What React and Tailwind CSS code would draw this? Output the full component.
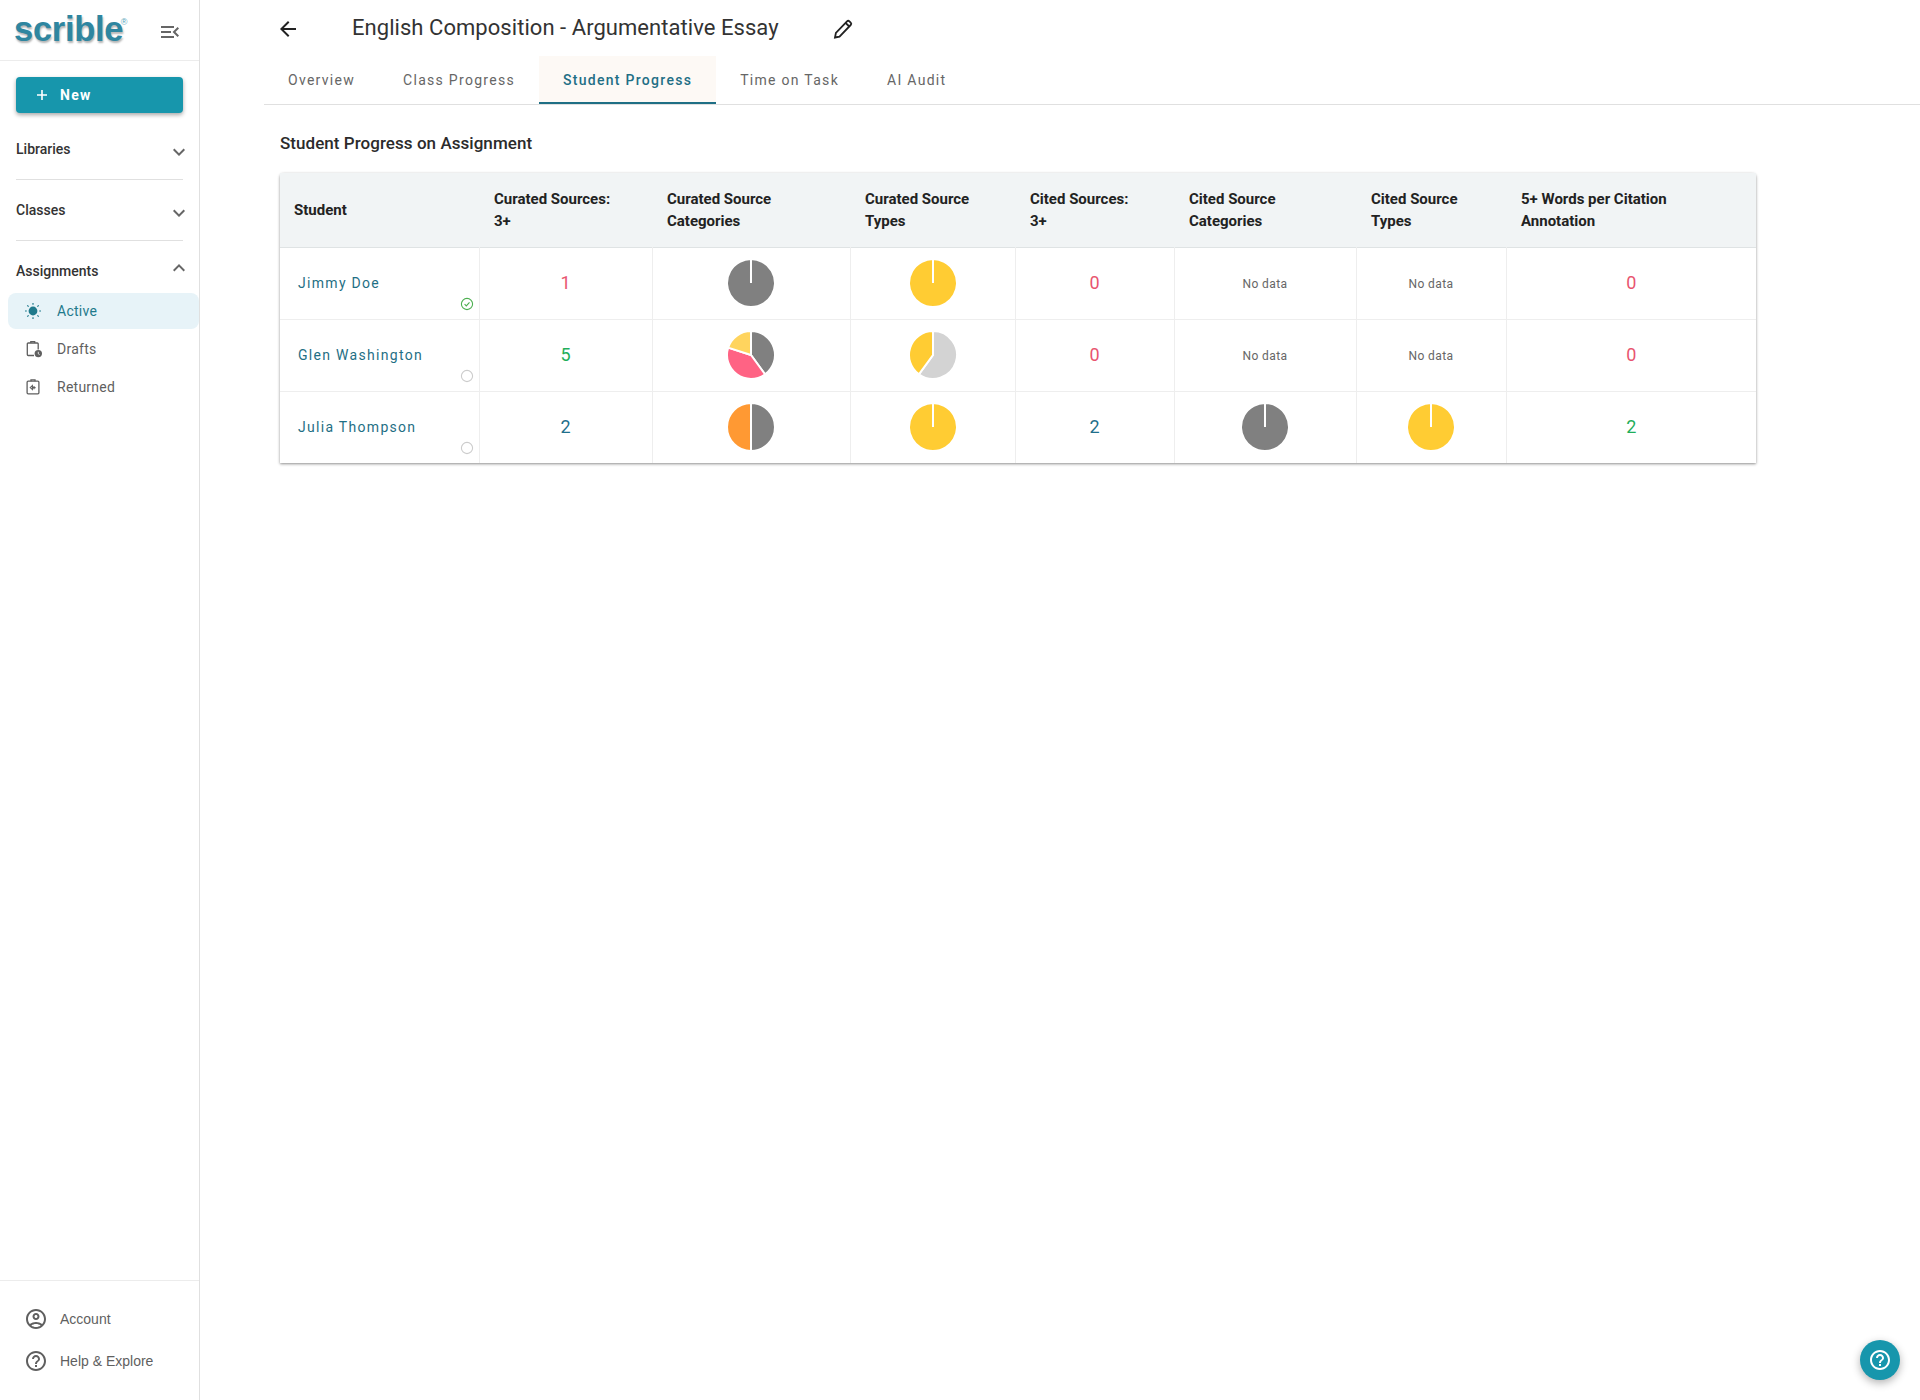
import React from "react";

const roboto = "font-['Roboto',sans-serif]";

// material icon paths, 24 box
const ICON = {
  menuOpen:
    "M3 18h13v-2H3v2zm0-5h10v-2H3v2zm0-7v2h13V6H3zm18 9.59L17.42 12 21 8.41 19.59 7l-5 5 5 5L21 15.59z",
  down: "M16.59 8.59 12 13.17 7.41 8.59 6 10l6 6 6-6z",
  up: "M12 8l-6 6 1.41 1.41L12 10.83l4.59 4.58L18 14z",
  back: "M20 11H7.83l5.59-5.59L12 4l-8 8 8 8 1.41-1.41L7.83 13H20v-2z",
  account:
    "M12 2C6.48 2 2 6.48 2 12s4.48 10 10 10 10-4.48 10-10S17.52 2 12 2zM7.35 18.5C8.66 17.56 10.26 17 12 17s3.34.56 4.65 1.5c-1.31.94-2.91 1.5-4.65 1.5s-3.34-.56-4.65-1.5zm10.79-1.38C16.45 15.8 14.32 15 12 15s-4.45.8-6.14 2.12C4.7 15.73 4 13.95 4 12c0-4.42 3.58-8 8-8s8 3.58 8 8c0 1.95-.7 3.73-1.86 5.12zM12 6c-1.93 0-3.5 1.57-3.5 3.5S10.07 13 12 13s3.5-1.57 3.5-3.5S13.93 6 12 6zm0 5c-.83 0-1.5-.67-1.5-1.5S11.17 8 12 8s1.5.67 1.5 1.5S12.83 11 12 11z",
  help: "M11 18h2v-2h-2v2zm1-16C6.48 2 2 6.48 2 12s4.48 10 10 10 10-4.48 10-10S17.52 2 12 2zm0 18c-4.41 0-8-3.59-8-8s3.59-8 8-8 8 3.59 8 8-3.59 8-8 8zm0-14c-2.21 0-4 1.79-4 4h2c0-1.1.9-2 2-2s2 .9 2 2c0 2-3 1.75-3 5h2c0-2.25 3-2.5 3-5 0-2.21-1.79-4-4-4z",
};

const Icon = ({ name, className }) => (
  <svg viewBox="0 0 24 24" fill="currentColor" className={className}>
    <path d={ICON[name]} />
  </svg>
);

const PencilIcon = () => (
  <svg viewBox="0 0 24 24" className="ml-[52px] mt-[17px] h-6 w-6 text-[#222]" fill="none" stroke="currentColor" strokeWidth="1.8">
    <path d="M4 20.5l.9-4.6L16 4.3a1.7 1.7 0 0 1 2.4 0l1.3 1.3a1.7 1.7 0 0 1 0 2.4L8.5 19.6 4 20.5z" />
    <path d="M14.6 5.8l3.6 3.7" />
  </svg>
);

const SunIcon = () => (
  <svg viewBox="0 0 18 18" className="h-[18px] w-[18px] text-[#1f7a8c]" fill="none" stroke="currentColor">
    <circle cx="9" cy="9" r="4.4" fill="currentColor" stroke="none" />
    <path
      d="M9 1v1.8M9 15.2V17M1 9h1.8M15.2 9H17M3.3 3.3l1.3 1.3M13.4 13.4l1.3 1.3M3.3 14.7l1.3-1.3M13.4 4.6l1.3-1.3"
      strokeWidth="1.2"
    />
  </svg>
);

const DraftIcon = () => (
  <svg viewBox="0 0 18 18" className="ml-[1px] -mr-[1px] h-[18px] w-[18px] text-[#5f5f5f]" fill="none" stroke="currentColor">
    <path d="M9 15.5H3.2a.9.9 0 0 1-.9-.9V3.9a.9.9 0 0 1 .9-.9h9.1a.9.9 0 0 1 .9.9v5.6" strokeWidth="1.3" />
    <path d="M5.8 3V1.7h3.9V3" strokeWidth="1.3" />
    <circle cx="13.3" cy="13.6" r="3.7" fill="currentColor" stroke="none" />
    <path d="M13.3 11.8v2l1.3.8" stroke="#fff" strokeWidth="0.8" />
  </svg>
);

const ReturnedIcon = () => (
  <svg viewBox="0 0 18 18" className="h-[18px] w-[18px] text-[#5f5f5f]" fill="none" stroke="currentColor">
    <rect x="3.1" y="3.2" width="11.8" height="12.6" rx="1.1" strokeWidth="1.3" />
    <path d="M7 3.2V1.9h4v1.3" strokeWidth="1.3" />
    <path d="M6.2 9.6l2.2-2v4zM8.2 9.6h3.4M10 8v3.2" strokeWidth="1.1" />
  </svg>
);

/* ---------- pie ---------- */

const GRAY = "#808080";
const YELLOW = "#ffcc33";
const LIGHT_YELLOW = "#ffd45e";
const PINK = "#ff6384";
const ORANGE = "#ff9933";
const SILVER = "#d3d3d3";

const Pie = ({ slices }) => {
  let start = 0;
  const r = 24;
  const point = (deg) => {
    const a = (deg * Math.PI) / 180;
    return [25 + r * Math.sin(a), 25 - r * Math.cos(a)];
  };

  return (
    <svg viewBox="0 0 50 50" className="mx-auto block h-[50px] w-[50px]">
      {slices.map(([pct, color]) => {
        const sweep = (pct / 100) * 360;
        const end = start + sweep;
        const [x1, y1] = point(start);
        const [x2, y2] = point(end === 360 && start === 0 ? 359.99 : end);
        const d = `M25 25L${x1} ${y1}A${r} ${r} 0 ${sweep > 180 ? 1 : 0} 1 ${x2} ${y2}Z`;
        start = end;
        return <path key={color + end} d={d} fill={color} stroke="#fff" strokeWidth="2" />;
      })}
    </svg>
  );
};

/* ---------- data ---------- */

const COLUMNS = [
  ["w-[199px] pl-[14px] pr-[15px]", ["Student"]],
  ["w-[173px] px-[15px]", ["Curated Sources:", "3+"]],
  ["w-[198px] px-[15px]", ["Curated Source", "Categories"]],
  ["w-[165px] px-[15px]", ["Curated Source", "Types"]],
  ["w-[159px] px-[15px]", ["Cited Sources:", "3+"]],
  ["w-[182px] px-[15px]", ["Cited Source", "Categories"]],
  ["w-[150px] px-[15px]", ["Cited Source", "Types"]],
  ["w-[250px] px-[15px]", ["5+ Words per Citation", "Annotation"]],
];

const RED = "text-[#e8546f]";
const GREEN = "text-[#1fae5b]";
const TEAL = "text-[#1f6f8b]";

const ROWS = [
  {
    name: "Jimmy Doe",
    done: true,
    cells: [
      [1, RED],
      [[100, GRAY]],
      [[100, YELLOW]],
      [0, RED],
      null,
      null,
      [0, RED],
    ],
  },
  {
    name: "Glen Washington",
    done: false,
    cells: [
      [5, GREEN],
      [
        [40, GRAY],
        [40, PINK],
        [20, LIGHT_YELLOW],
      ],
      [
        [60, SILVER],
        [40, YELLOW],
      ],
      [0, RED],
      null,
      null,
      [0, RED],
    ],
  },
  {
    name: "Julia Thompson",
    done: false,
    cells: [
      [2, TEAL],
      [
        [50, GRAY],
        [50, ORANGE],
      ],
      [[100, YELLOW]],
      [2, TEAL],
      [[100, GRAY]],
      [[100, YELLOW]],
      [2, GREEN],
    ],
  },
];

const Cell = ({ value }) => {
  if (value === null) {
    return <span className="text-xs tracking-[0.4px] text-[#666]">No data</span>;
  }
  if (typeof value[0] === "number" && typeof value[1] === "string" && value[1].startsWith("text-")) {
    return <span className={`text-lg ${value[1]}`}>{value[0]}</span>;
  }
  return <Pie slices={value} />;
};

const NavHeading = ({ label, open, divider }) => (
  <div className={`mx-4 flex h-[61px] items-start justify-between ${divider ? "border-b border-[#e0e0e0]" : ""}`}>
    <span className="mt-[20px] text-sm font-medium text-[#333]">{label}</span>
    <Icon
      name={open ? "up" : "down"}
      className={`-mr-[8px] h-6 w-6 text-[#666] ${open ? "mt-[15px]" : "mt-[21px]"}`}
    />
  </div>
);

const NavItem = ({ icon, label, active }) => (
  <div
    className={`ml-2 flex h-9 w-[191px] items-center gap-[15px] rounded-lg pl-4 text-sm tracking-[0.25px] ${
      active ? "bg-[#e7f3f8] text-[#1f7a8c]" : "text-[#5f5f5f]"
    }`}
  >
    {icon}
    <span>{label}</span>
  </div>
);

const TABS = ["Overview", "Class Progress", "Student Progress", "Time on Task", "AI Audit"];

export default function App() {
  return (
    <div className={`relative flex h-[1400px] w-[1920px] overflow-hidden bg-white ${roboto}`}>
      {/* SIDEBAR */}
      <aside className="flex w-[200px] shrink-0 flex-col border-r border-[#e0e0e0]">
        <div className="flex h-[61px] shrink-0 items-start justify-between border-b border-[#ececec] pl-[14px] pr-[17px]">
          <span className="relative mt-[9px] font-['Liberation_Sans',sans-serif] text-[34.5px] leading-[40px] font-bold tracking-[-0.3px] text-[#2f86a0] [text-shadow:1px_2px_2px_#b5b5b5]">
            scrible
            <span className="absolute -right-[4px] top-[9px] text-[9px] leading-[8px] font-normal text-[#5aa5bb] [text-shadow:none]">
              ®
            </span>
          </span>
          <Icon name="menuOpen" className="mt-[20px] h-6 w-6 text-[#666]" />
        </div>

        <div className="mx-4 mt-4 flex h-9 shrink-0 items-center rounded bg-[#1796ac] pl-5 text-sm font-bold tracking-[1.25px] text-white shadow-[0_2px_4px_rgba(0,0,0,0.35)]">
          <svg viewBox="0 0 12 12" className="mr-3 h-3 w-3" fill="none" stroke="currentColor" strokeWidth="1.6">
            <path d="M6 1v10M1 6h10" />
          </svg>
          New
        </div>

        <div className="mt-[6px]">
          <NavHeading label="Libraries" divider />
          <NavHeading label="Classes" divider />
          <NavHeading label="Assignments" open />
        </div>

        <div className="-mt-[9px] flex flex-col gap-[2px]">
          <NavItem icon={<SunIcon />} label="Active" active />
          <NavItem icon={<DraftIcon />} label="Drafts" />
          <NavItem icon={<ReturnedIcon />} label="Returned" />
        </div>

        <div className="mt-auto flex h-[120px] flex-col gap-[18px] border-t border-[#ececec] pl-6 pt-[26px] font-['Liberation_Sans',sans-serif] text-sm text-[#5f5f5f]">
          <div className="flex h-6 items-center gap-3">
            <Icon name="account" className="h-6 w-6" />
            <span>Account</span>
          </div>
          <div className="flex h-6 items-center gap-3">
            <Icon name="help" className="h-6 w-6" />
            <span>Help &amp; Explore</span>
          </div>
        </div>
      </aside>

      {/* MAIN */}
      <main className="ml-[64px] flex-1">
        <div className="flex h-[56px] items-start pl-[12px] text-[#333]">
          <Icon name="back" className="mt-[17px] h-6 w-6 text-[#222]" />
          <h1 className="ml-[52px] mt-[12px] text-[22px] leading-[32px] font-normal tracking-[0.05px]">
            English Composition - Argumentative Essay
          </h1>
          <PencilIcon />
        </div>

        <div className="flex h-[49px] border-b border-[#e0e0e0]">
          {TABS.map((tab) => {
            const active = tab === "Student Progress";
            return (
              <div
                key={tab}
                className={`flex h-12 items-center px-6 text-sm tracking-[1.29px] ${
                  active
                    ? "border-b-2 border-[#1f6f85] bg-[#fdf9f5] pt-[2px] font-medium text-[#1f6f85]"
                    : "text-[#666]"
                }`}
              >
                {tab}
              </div>
            );
          })}
        </div>

        <div className="pl-[16px]">
          <h2 className="mt-[26px] text-[17px] leading-[24px] font-medium tracking-[0.05px] text-[#2b2b2b]">
            Student Progress on Assignment
          </h2>

          <table className="mt-[18px] w-[1476px] table-fixed border-collapse rounded-t shadow-[0_1px_3px_rgba(0,0,0,0.45)]">
            <thead>
              <tr className="h-[74px] border-b border-[#dfe3e4] bg-[#f1f4f5]">
                {COLUMNS.map(([width, lines]) => (
                  <th
                    key={lines.join()}
                    className={`${width} text-left text-[15px] leading-[22px] font-bold text-[#222]`}
                  >
                    {lines.map((line) => (
                      <div key={line}>{line}</div>
                    ))}
                  </th>
                ))}
              </tr>
            </thead>
            <tbody>
              {ROWS.map((row) => (
                <tr key={row.name} className="h-[72px] border-b border-[#eeeeee] last:border-b-0">
                  <td className="relative border-r border-[#eeeeee] pl-[18px] text-sm tracking-[1.3px] text-[#1f6f85]">
                    {row.name}
                    <span className="absolute bottom-[8px] right-[5px]">
                      {row.done ? (
                        <svg viewBox="0 0 14 14" className="h-[14px] w-[14px]" fill="none" stroke="#4caf50">
                          <circle cx="7" cy="7" r="5.6" strokeWidth="1.1" />
                          <path d="M4.6 7.2l1.7 1.7 3.2-3.5" strokeWidth="1.1" />
                        </svg>
                      ) : (
                        <svg viewBox="0 0 14 14" className="h-[14px] w-[14px]" fill="none" stroke="#cccccc">
                          <circle cx="7" cy="7" r="5.6" strokeWidth="1.1" />
                        </svg>
                      )}
                    </span>
                  </td>
                  {row.cells.map((value, i) => (
                    <td key={i} className="border-r border-[#eeeeee] text-center last:border-r-0">
                      <Cell value={value} />
                    </td>
                  ))}
                </tr>
              ))}
            </tbody>
          </table>
        </div>
      </main>

      {/* HELP FAB */}
      <div className="absolute bottom-5 right-5 flex h-10 w-10 items-center justify-center rounded-full bg-[#1796ac] text-white shadow-[0_3px_8px_rgba(0,0,0,0.3)]">
        <Icon name="help" className="h-6 w-6" />
      </div>
    </div>
  );
}
